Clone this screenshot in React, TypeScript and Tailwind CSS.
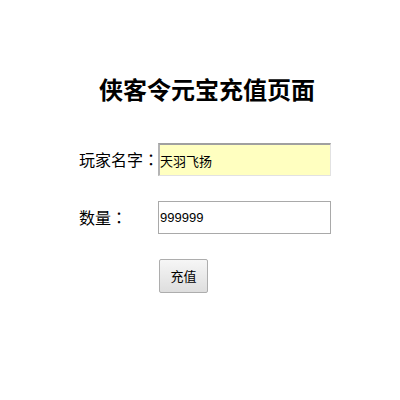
const font = { fontFamily: '"Noto Sans CJK SC", "Liberation Sans", sans-serif' };
const colon = { fontFamily: '"Noto Sans CJK TC", sans-serif' };

const App = () => (
  <div className="w-[400px] h-[400px] bg-white text-black" style={font}>
    <h1 className="pt-[71px] pl-[14px] text-center text-[24px] leading-[36px] font-bold">侠客令元宝充值页面</h1>

    <div className="mt-[36px] pl-[79px] grid grid-cols-[80px_173px] items-center gap-y-[25px]">
      <label className="whitespace-nowrap text-[16px] leading-[33px]">
        玩家名字<span style={colon}>：</span>
      </label>
      <input
        defaultValue="天羽飞扬"
        className="-ml-[1px] h-[33px] w-[173px] bg-[#ffffc0] border-t-2 border-l-2 border-r border-b border-t-[#a0a0a0] border-l-[#b4b4b4] border-r-[#e2e2e2] border-b-[#e2e2e2] px-0 text-[13px] outline-none"
      />

      <label className="whitespace-nowrap text-[16px] leading-[33px]">
        数量<span style={colon}>：</span>
      </label>
      <input
        defaultValue="999999"
        className="-ml-[1px] h-[33px] w-[173px] bg-white border border-[#a9a9a9] pl-[1px] text-[13px] outline-none"
        style={{ fontFamily: '"Liberation Sans", sans-serif' }}
      />

      <div />
      <button className="h-[34px] w-[49px] rounded-[2px] border border-[#adadad] bg-gradient-to-b from-[#f6f6f6] to-[#dedede] text-[13px] text-black">
        充值
      </button>
    </div>
  </div>
);

export default App;
